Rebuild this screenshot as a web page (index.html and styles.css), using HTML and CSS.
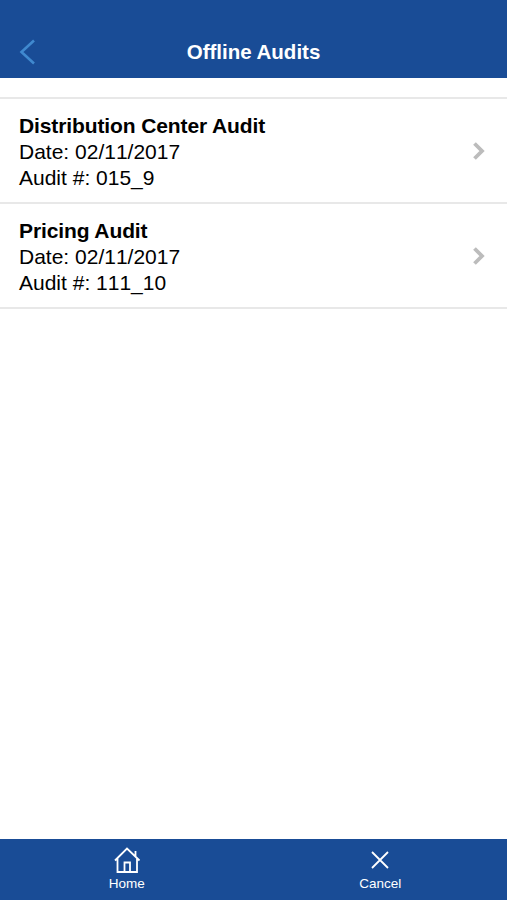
FILE: index.html
```html
<!DOCTYPE html>
<html lang="en">
<head>
<meta charset="utf-8">
<title>Offline Audits</title>
<link rel="stylesheet" href="styles.css">
</head>
<body>
<header class="header">
  <svg class="back" viewBox="0 0 16 26"><path d="M15 1.500 2.500 13 15 24.500"/></svg>
  <h1 class="title">Offline Audits</h1>
</header>
<main class="list">
  <article class="row">
    <div class="info">
      <h2 class="name">Distribution Center Audit</h2>
      <p class="line">Date: 02/11/2017</p>
      <p class="line">Audit #: 015_9</p>
    </div>
    <svg class="chevron" viewBox="0 0 14 20"><path d="m2.500 2.500 7.500 7.500-7.500 7.500"/></svg>
  </article>
  <article class="row">
    <div class="info">
      <h2 class="name">Pricing Audit</h2>
      <p class="line">Date: 02/11/2017</p>
      <p class="line">Audit #: 111_10</p>
    </div>
    <svg class="chevron" viewBox="0 0 14 20"><path d="m2.500 2.500 7.500 7.500-7.500 7.500"/></svg>
  </article>
</main>
<nav class="tabs">
  <div class="tab">
    <svg class="icon" viewBox="0 0 28 28"><path d="M2 14.500 14 2.500l12.500 12M4.500 12.500v13.500h19.500V12.500M11.500 26v-9.500h5.500V26M22.500 5v5.500"/></svg>
    <span>Home</span>
  </div>
  <div class="tab">
    <svg class="icon" viewBox="0 0 28 28"><path d="m6 6 16 16M22 6 6 22"/></svg>
    <span>Cancel</span>
  </div>
</nav>
</body>
</html>
```
FILE: styles.css
```css
* { box-sizing: border-box; margin: 0; padding: 0; }
body {
  display: flex;
  flex-direction: column;
  height: 900px;
  overflow: hidden;
  background: #fff;
  color: #000;
  font-family: "Liberation Sans", Arial, sans-serif;
}
.header {
  display: grid;
  grid-template-columns: 40px 1fr 40px;
  align-items: center;
  height: 78px;
  padding-top: 26px;
  background: #194c96;
}
.back { width: 16px; height: 26px; margin-left: 19px; fill: none; stroke: #4089cf; stroke-width: 2.6; }
.title { color: #fff; font-size: 20.5px; line-height: 26px; text-align: center; }
.list { flex: 1; margin-top: 19px; border-top: 2px solid #e8e8e8; }
.row {
  display: flex;
  align-items: center;
  justify-content: space-between;
  height: 105px;
  padding: 0 21px 0 19px;
  border-bottom: 2px solid #e8e8e8;
}
.info { padding-top: 2px; }
.name { font-size: 21px; line-height: 26px; letter-spacing: -0.11px; }
.line { font-size: 21px; line-height: 25.6px; font-kerning: none; }
.chevron { width: 14px; height: 20px; fill: none; stroke: #bcbcbc; stroke-width: 3.8; }
.tabs { display: flex; height: 61px; background: #194c96; }
.tab {
  flex: 1;
  display: flex;
  flex-direction: column;
  align-items: center;
  padding-top: 7px;
  color: #fff;
  font-size: 13.5px;
  line-height: 20px;
}
.icon { width: 28px; height: 28px; fill: none; stroke: #fff; stroke-width: 1.8; }
```
